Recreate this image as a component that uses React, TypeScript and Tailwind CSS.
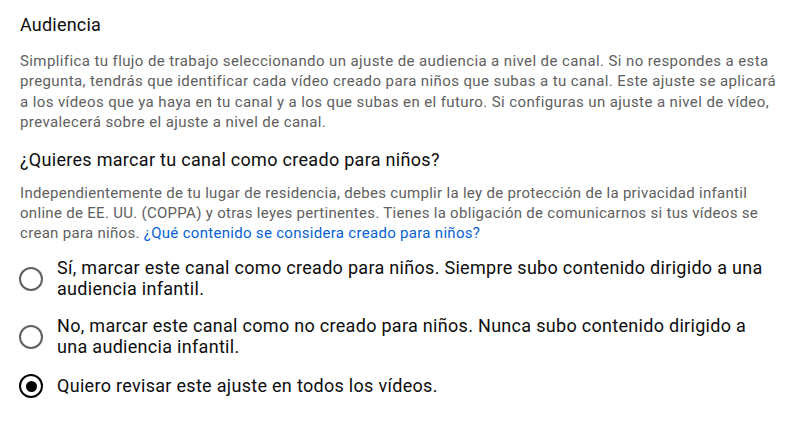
import React from "react";

const options = [
  {
    label:
      "Sí, marcar este canal como creado para niños. Siempre subo contenido dirigido a una audiencia infantil.",
    checked: false,
  },
  {
    label:
      "No, marcar este canal como no creado para niños. Nunca subo contenido dirigido a una audiencia infantil.",
    checked: false,
  },
  {
    label: "Quiero revisar este ajuste en todos los vídeos.",
    checked: true,
  },
];

const Radio: React.FC<{ checked: boolean }> = ({ checked }) => (
  <span
    className={
      checked
        ? "flex h-[24px] w-[24px] shrink-0 items-center justify-center rounded-full border-[2.5px] border-[#030303]"
        : "flex h-[24px] w-[24px] shrink-0 items-center justify-center rounded-full border-2 border-[#606060]"
    }
  >
    {checked && <span className="h-[11px] w-[11px] rounded-full bg-[#030303]" />}
  </span>
);

const App: React.FC = () => {
  return (
    <div className="min-h-[422px] w-[792px] bg-white pl-[19px] pr-5 pt-[13px] font-['Roboto',sans-serif]">
      <h2 className="pl-px text-[18px] leading-[24px] tracking-[0.2px] text-[#0d0d0d]">
        Audiencia
      </h2>
      <p className="mt-[14px] w-[760px] pl-px text-[15px] leading-[20.3px] tracking-[0.4px] text-[#606060]">
        Simplifica tu flujo de trabajo seleccionando un ajuste de audiencia a
        nivel de canal. Si no respondes a esta pregunta, tendrás que
        identificar cada vídeo creado para niños que subas a tu canal. Este
        ajuste se aplicará a los vídeos que ya haya en tu canal y a los que
        subas en el futuro. Si configuras un ajuste a nivel de vídeo,
        prevalecerá sobre el ajuste a nivel de canal.
      </p>

      <h3 className="mt-4 pl-px text-[18px] leading-[24px] tracking-[0.3px] text-[#0d0d0d]">
        ¿Quieres marcar tu canal como creado para niños?
      </h3>
      <p className="mt-[11px] w-[760px] pl-px text-[15px] leading-[20px] tracking-[0.3px] text-[#606060]">
        Independientemente de tu lugar de residencia, debes cumplir la ley de
        protección de la privacidad infantil online de EE. UU. (COPPA) y otras
        leyes pertinentes. Tienes la obligación de comunicarnos si tus vídeos
        se crean para niños.{" "}
        <a className="text-[#065fd4]">
          ¿Qué contenido se considera creado para niños?
        </a>
      </p>

      <div className="mt-[15px] flex flex-col gap-[17px]">
        {options.map((o) => (
          <label key={o.label} className="flex items-center gap-[14px]">
            <Radio checked={o.checked} />
            <span className="w-[715px] text-[18px] leading-[20.5px] tracking-[0.3px] text-[#0d0d0d]">
              {o.label}
            </span>
          </label>
        ))}
      </div>
    </div>
  );
};

export default App;
